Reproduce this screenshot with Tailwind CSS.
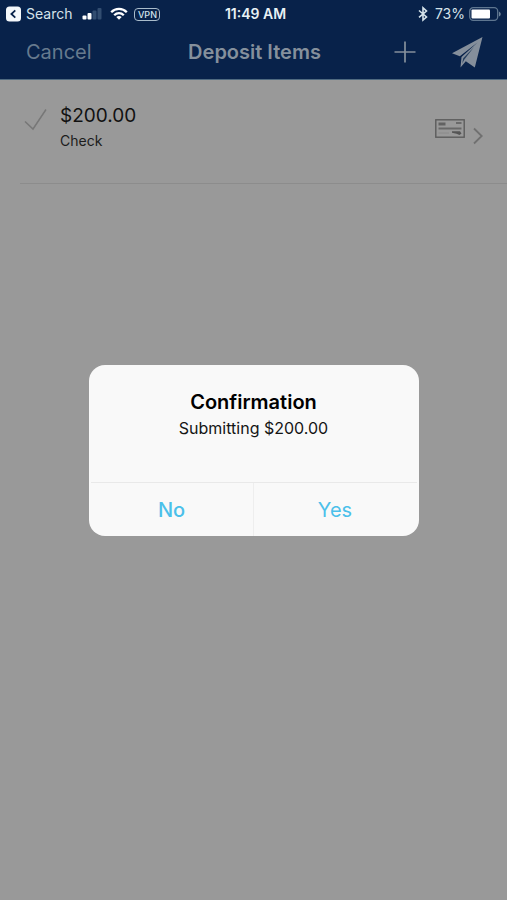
<!DOCTYPE html>
<html lang="en">
<head>
<meta charset="utf-8">
<meta name="viewport" content="width=device-width, initial-scale=1">
<title>Deposit Items</title>
<script src="https://cdn.jsdelivr.net/npm/@tailwindcss/browser@4"></script>
</head>
<body class="relative flex min-h-screen flex-col bg-[#999999] font-['Inter','Liberation_Sans',sans-serif] text-black">
<header class="border-b border-[#4f6a80] bg-[#08224a]">
  <div class="grid h-7 grid-cols-[1fr_auto_1fr] items-center pr-1.5 pl-1.5 text-sm text-[#d5e3ea]">
    <div class="flex items-center">
      <a href="#" class="flex items-center gap-1">
        <svg class="size-4" viewBox="0 0 16 16" aria-hidden="true"><rect x="0" y="0.5" width="15" height="15" rx="3.5" fill="#f4f8fb"/><path d="M9.3 4.4 5.400 8l3.900 3.600" fill="none" stroke="#08224a" stroke-width="1.800"/></svg>
        <span>Search</span>
      </a>
      <svg class="ml-2.5 h-4 w-5" viewBox="0 0 20 16" aria-hidden="true"><rect x="0.500" y="9.500" width="4" height="4" rx="1" fill="#fff"/><rect x="5.500" y="7" width="4" height="6.500" rx="1" fill="#fff"/><rect x="10.500" y="4.500" width="4" height="9" rx="1" fill="#324d70"/><rect x="15.500" y="2" width="4" height="11.500" rx="1" fill="#324d70"/></svg>
      <svg class="ml-2 h-4 w-[18px]" viewBox="0 0 18 16" fill="none" stroke="#fff" stroke-width="2.300" aria-hidden="true"><path d="M1.200 6.200C5.500 1.700 12.500 1.700 16.800 6.200"/><path d="M4.200 9.300C7 6.500 11 6.500 13.800 9.300"/><path d="M9 13.700 6.300 11C7.700 9.600 10.300 9.600 11.700 11Z" fill="#fff" stroke="none"/></svg>
      <span class="ml-1.5 flex h-[13px] w-[26px] items-center justify-center rounded-sm border border-[#a9bccb] text-[9px] leading-none font-medium">VPN</span>
    </div>
    <time class="pl-1 font-semibold text-[#e8f1f5]">11:49 AM</time>
    <div class="flex items-center justify-end">
      <svg class="h-4 w-3" viewBox="0 0 12 16" fill="none" stroke="#d5e3ea" stroke-width="1.600" aria-hidden="true"><path d="M2 4.500 9.500 11 6 14V1.800L9.500 5 2 11.300"/></svg>
      <span class="ml-1.5">73%</span>
      <svg class="ml-1 h-4 w-8" viewBox="0 0 32 16" aria-hidden="true"><rect x="0.700" y="1.700" width="28" height="12.600" rx="3.500" fill="none" stroke="#5e7690" stroke-width="1.300"/><rect x="2.500" y="3.500" width="18.500" height="9" rx="1" fill="#fff"/><path d="M30 5.500Q31.800 6.500 31.800 8T30 10.500Z" fill="#6f859b"/></svg>
    </div>
  </div>
  <nav class="grid h-[51px] grid-cols-[1fr_auto_1fr] items-center pr-6 pb-1 pl-[26px] text-xl text-[#85909c]">
    <button type="button" class="justify-self-start text-[#667a8e]">Cancel</button>
    <h1 class="font-semibold">Deposit Items</h1>
    <div class="flex items-center justify-end gap-[34px]">
      <button type="button" aria-label="Add item"><svg class="size-6" viewBox="0 0 24 24" stroke="#85909c" stroke-width="1.700" aria-hidden="true"><path d="M12 1.500v21M1.500 12h21"/></svg></button>
      <button type="button" aria-label="Submit deposit"><svg class="h-8 w-8" viewBox="0 0 32 32" fill="#858f9b" aria-hidden="true"><path d="M31.500 1 1 17.200 8.800 20.300 26.500 6.500 10.500 21 9.500 31.500 14.800 25.300 23.800 31.500Z"/><path d="M11.200 27.500 12.200 22.300 23 11 13.200 23.800Z" fill="#27405f"/></svg></button>
    </div>
  </nav>
</header>
<main class="grow">
  <ul>
    <li class="ml-5 border-b border-[#8c8c8c]">
      <a href="#" class="flex h-[103px] items-start pt-6 pr-6 pl-1">
        <svg class="mt-1 h-6 w-6" viewBox="0 0 24 24" fill="none" stroke="#777" stroke-width="1.500" aria-hidden="true"><path d="M1 13.500 9 21 22 1.500"/></svg>
        <span class="ml-3 flex grow flex-col">
          <span class="text-[19px] leading-6 text-[#111]">$200.00</span>
          <span class="text-sm leading-[26px] text-[#1c1c1c]">Check</span>
        </span>
        <svg class="mt-[15px] h-5 w-[30px]" viewBox="0 0 30 20" fill="none" aria-hidden="true"><rect x="0.800" y="0.800" width="28.400" height="17.400" stroke="#5c5c5c" stroke-width="1.400"/><path d="M3.500 5H10.500" stroke="#626262" stroke-width="3"/><path d="M21 4H26.500" stroke="#626262" stroke-width="1.700"/><path d="M3.500 9.500H26.500" stroke="#686868" stroke-width="2"/><path d="M3.500 14H14" stroke="#8a8a8a"/><path d="M17 12.200H25L26.500 14.500 24.500 16 21.500 14.800 17 13.800Z" fill="#555"/></svg>
        <svg class="mt-[23px] ml-2 h-[18px] w-[10px]" viewBox="0 0 10 18" fill="none" stroke="#707070" stroke-width="1.800" aria-hidden="true"><path d="M1 1.500 8.700 9 1 16.500"/></svg>
      </a>
    </li>
  </ul>
</main>
<div class="absolute inset-0 flex items-center justify-center">
  <section role="alertdialog" aria-modal="true" aria-labelledby="dialog-title" aria-describedby="dialog-text" class="mx-6 w-full max-w-[330px] rounded-2xl bg-[#f9f9f9]">
    <div class="px-4 pt-[23px] pb-[42px] text-center">
      <h2 id="dialog-title" class="text-xl leading-7 font-semibold">Confirmation</h2>
      <p id="dialog-text" class="text-base leading-6 text-[#151515]">Submitting $200.00</p>
    </div>
    <div class="mx-0.5 grid grid-cols-2 border-t border-[#e9e9e9] text-xl text-[#4bc0ea]">
      <button type="button" class="h-[53px] border-r border-[#eeeeee] pt-0.5 font-medium">No</button>
      <button type="button" class="h-[53px] pt-0.5">Yes</button>
    </div>
  </section>
</div>
</body>
</html>
